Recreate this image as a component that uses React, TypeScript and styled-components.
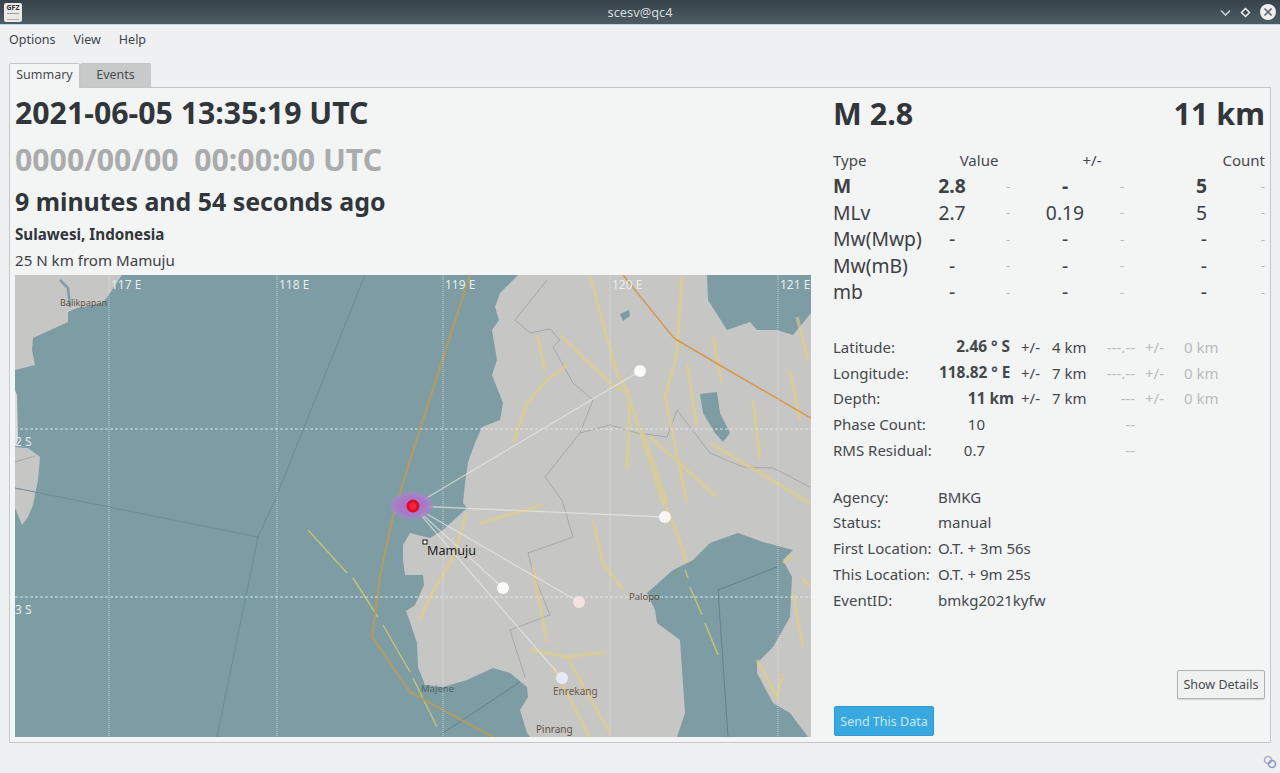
import styled, { createGlobalStyle } from 'styled-components'

const GlobalStyle = createGlobalStyle`
  html, body {
    margin: 0;
    padding: 0;
    height: 100%;
    overflow: hidden;
    background: #eff0f1;
  }
  #root {
    height: 100%;
  }
`

const Window = styled.div`
  display: flex;
  flex-direction: column;
  width: 1280px;
  height: 773px;
  font-family: 'Noto Sans', 'Open Sans', sans-serif;
  color: #31363b;
  background: #eff0f1;
`

const TitleBar = styled.header`
  position: relative;
  display: flex;
  align-items: center;
  justify-content: center;
  height: 25px;
  padding-bottom: 1px;
  box-sizing: border-box;
  flex: none;
  background: linear-gradient(#37424a, #4e5b63);
  border-bottom: 1px solid #b9d6ea;
  color: #d5dade;
  font-size: 12.8px;
  margin-bottom: 1px;
`

const AppIcon = styled.div`
  position: absolute;
  left: 4px;
  top: 3px;
  width: 18px;
  height: 19px;
  border-radius: 2px;
  background: #e9e9e7;
  color: #2f3336;
  font-size: 7px;
  font-weight: 700;
  line-height: 9px;
  text-align: center;
  &::after {
    content: '';
    position: absolute;
    left: 3px;
    right: 3px;
    top: 10px;
    height: 5px;
    border-top: 1px solid #9a9c9d;
    border-bottom: 1px solid #b0b2b3;
  }
`

const WindowButtons = styled.div`
  position: absolute;
  right: 3px;
  top: 3px;
  display: flex;
  align-items: center;
  gap: 7px;
`

const MenuBar = styled.nav`
  display: flex;
  gap: 18px;
  height: 26px;
  flex: none;
  align-items: center;
  padding-left: 9px;
  font-size: 12.5px;
  color: #3f4549;
`

const Tabs = styled.div`
  display: flex;
  height: 24px;
  flex: none;
  margin: 11px 0 0 9px;
`

const Tab = styled.div<{ $active?: boolean }>`
  display: flex;
  align-items: center;
  justify-content: center;
  width: 71px;
  height: ${p => (p.$active ? '25px' : '24px')};
  padding-bottom: ${p => (p.$active ? '3px' : '2px')};
  box-sizing: border-box;
  font-size: 12.5px;
  color: #474c50;
  border: 1px solid #c4c6c7;
  border-bottom: 0;
  border-radius: 2px 2px 0 0;
  background: ${p => (p.$active ? '#f3f4f4' : '#c8caca')};
  position: relative;
  z-index: ${p => (p.$active ? 1 : 0)};
`

const Panel = styled.main`
  display: grid;
  grid-template-columns: 796px 1fr;
  column-gap: 22px;
  width: 1262px;
  height: 656px;
  flex: none;
  box-sizing: border-box;
  margin-left: 9px;
  padding: 5px 6px 5px 5px;
  background: #f3f4f4;
  border: 1px solid #c4c6c7;
`

const LeftColumn = styled.section`
  display: flex;
  flex-direction: column;
  min-height: 0;
`

const DateLine = styled.div<{ $muted?: boolean }>`
  font-size: 30.25px;
  font-weight: 700;
  line-height: 40px;
  height: ${p => (p.$muted ? '43px' : '47px')};
  color: ${p => (p.$muted ? '#a9abac' : '#31363b')};
  white-space: pre;
`

const AgoLine = styled.div`
  font-size: 24.9px;
  font-weight: 700;
  line-height: 36px;
  height: 38px;
`

const RegionLine = styled.div`
  font-size: 15.2px;
  font-weight: 700;
  line-height: 26px;
`

const PlaceLine = styled.div`
  font-size: 15.1px;
  line-height: 26px;
  height: 28px;
  color: #3c4145;
`

const MapFrame = styled.div`
  height: 462px;
  flex: none;
  svg {
    display: block;
  }
`

const RightColumn = styled.section`
  display: flex;
  flex-direction: column;
  min-height: 0;
`

const Headline = styled.div`
  display: flex;
  justify-content: space-between;
  height: 54px;
  font-size: 30.5px;
  font-weight: 700;
  line-height: 40px;
`

const MagGrid = styled.div`
  display: grid;
  grid-template-columns: 90px 58px 54px 60px 54px 58px 58px;
  grid-template-rows: 25.5px;
  grid-auto-rows: 26.5px;
  align-items: center;
  font-size: 19.3px;
  color: #3c4145;
  width: 432px;
`

const MagHead = styled.div<{ $align?: string; $span?: number }>`
  font-size: 15px;
  text-align: ${p => p.$align || 'left'};
  color: #44494d;
  white-space: nowrap;
  grid-column: span ${p => p.$span || 1};
`

const MagCell = styled.div<{ $align?: string; $bold?: boolean; $faint?: boolean }>`
  text-align: ${p => p.$align || 'left'};
  font-weight: ${p => (p.$bold ? 700 : 400)};
  color: ${p => (p.$faint ? '#b5b7b8' : 'inherit')};
  white-space: nowrap;
  ${p => p.$faint && 'font-size: 13px;'}
`

const InfoGrid = styled.div`
  display: grid;
  grid-template-columns: 106px 71px 11px 31px 46px 37px 49px 1fr;
  grid-auto-rows: 25.75px;
  align-items: center;
  margin-top: 29px;
  font-size: 15px;
  color: #44494d;
`

const InfoCell = styled.div<{ $align?: string; $bold?: boolean; $faint?: boolean; $span?: number }>`
  text-align: ${p => p.$align || 'left'};
  font-weight: ${p => (p.$bold ? 700 : 400)};
  font-size: ${p => (p.$bold ? '15.4px' : 'inherit')};
  color: ${p => (p.$faint ? '#b9bbbc' : 'inherit')};
  white-space: nowrap;
  ${p => p.$span && `grid-column: span ${p.$span};`}
`

const InfoValue = styled(InfoCell)<{ $outdent?: boolean }>`
  margin-right: ${p => (p.$outdent ? '-4px' : '0')};
`

const FaintSign = styled(InfoCell)`
  padding-left: 10px;
`

const CountValue = styled(InfoCell)`
  padding-right: 25px;
  text-align: right;
`

const MetaList = styled.dl`
  display: grid;
  grid-template-columns: 105px 1fr;
  grid-auto-rows: 25.75px;
  align-items: center;
  margin: 21px 0 0;
  font-size: 15px;
  color: #44494d;
  dt, dd {
    margin: 0;
  }
`

const Footer = styled.div`
  display: flex;
  flex-direction: column;
  margin-top: auto;
  padding-bottom: 1px;
`

const DetailsButton = styled.button`
  align-self: flex-end;
  width: 88px;
  height: 29px;
  padding: 0;
  font: inherit;
  font-size: 12.5px;
  color: #474c50;
  background: #f0f1f1;
  border: 1px solid #b0b2b3;
  border-radius: 2px;
  box-shadow: 0 1px 1px rgba(0, 0, 0, 0.15);
`

const SendButton = styled.button`
  width: 100px;
  height: 30px;
  margin: 7px 0 0 1px;
  padding: 0;
  font: inherit;
  font-size: 12.5px;
  color: #c8e8f7;
  background: #38a8e0;
  border: 1px solid #3398d0;
  border-radius: 2px;
`

const StatusBar = styled.footer`
  display: flex;
  flex: 1;
  justify-content: flex-end;
  align-items: flex-end;
  padding: 0 3px 4px 0;
`

const mainLand = '518,275 500,293 495,307 499,320 492,330 497,360 492,375 503,403 500,420 482,427 475,443 468,462 465,483 463,503 467,508 443,530 430,538 410,533 403,545 403,560 405,575 423,575 424,585 415,605 406,611 410,622 417,643 418,667 425,685 443,687 467,680 493,668 510,673 527,687 528,697 520,710 527,733 530,737 677,737 685,713 680,640 657,623 655,610 647,593 673,570 693,560 710,543 738,533 763,542 793,550 783,560 792,577 790,617 773,647 757,663 757,673 773,703 790,713 808,737 811,737 811,313 793,335 777,330 757,330 750,322 727,330 708,300 707,275'

const boundaries = [
  '547,280 523,310 515,320 530,333 550,329 560,340 553,347 573,383 593,400 580,433 610,425 637,433 667,437 677,410 690,427 710,453 743,467 773,468 810,487',
  '580,433 545,477 562,500 573,537 528,553 533,573 550,615 510,630 525,677',
  '15,462 35,456',
]

const faults = [
  '590,276 617,373 627,390 663,503',
  '682,276 677,353 665,397 670,420 687,503',
  '687,363 697,427',
  '713,337 722,383',
  '753,400 760,460',
  '790,370 800,420',
  '797,317 808,360',
  '537,335 545,370',
  '567,365 547,380 527,403 513,443',
  '560,335 610,383 627,393',
  '630,403 627,470',
  '643,433 667,503',
  '650,437 717,497',
  '710,443 810,503',
  '467,513 453,557 430,597 420,620',
  '480,523 543,505',
  '593,520 603,563 623,590',
  '533,567 547,643',
  '530,650 567,657 607,652',
  '567,657 610,733',
  '553,667 590,737',
  '663,500 677,533 687,563',
  '793,593 803,647',
  '757,660 777,697 783,673',
  '783,563 793,555',
  '803,578 810,587',
]

const seaFaults = [
  '308,530 347,573',
  '353,578 378,617',
  '383,625 410,672',
  '413,678 437,727',
  '685,570 688,578',
  '690,587 702,615',
  '705,623 718,655',
]

const stations = [
  { x: 640, y: 371, fill: '#fbfbfb' },
  { x: 665, y: 517, fill: '#f6f6f6' },
  { x: 503, y: 588, fill: '#fafafa' },
  { x: 579, y: 602, fill: '#f3e2e2' },
  { x: 562, y: 678, fill: '#e8e8f6' },
]

const gridX = [
  { x: 109, label: '117 E' },
  { x: 277, label: '118 E' },
  { x: 443, label: '119 E' },
  { x: 610, label: '120 E' },
  { x: 778, label: '121 E' },
]

const gridY = [
  { y: 429, label: '2 S' },
  { y: 597, label: '3 S' },
]

const mapLabels = [
  { x: 60, y: 306, text: 'Balikpapan', size: 9, fill: '#5d5348' },
  { x: 629, y: 600, text: 'Palopo', size: 9.5, fill: '#5d5348' },
  { x: 421, y: 692, text: 'Majene', size: 9.5, fill: '#55666a' },
  { x: 553, y: 695, text: 'Enrekang', size: 10, fill: '#6d5a44' },
  { x: 536, y: 733, text: 'Pinrang', size: 10, fill: '#5d5348' },
]

const QuakeMap = () => (
  <svg width={796} height={462} viewBox="15 275 796 462">
    <defs>
      <radialGradient id="uncertainty">
        <stop offset="0" stopColor="#b868c4" />
        <stop offset="0.7" stopColor="#a67cc8" />
        <stop offset="1" stopColor="#a28ac8" stopOpacity="0.7" />
      </radialGradient>
    </defs>
    <rect x={15} y={275} width={796} height={462} fill="#7d9ca3" />
    <polygon points="15,275 122,275 110,293 103,303 77,308 68,312 68,322 33,338 32,350 35,365 15,370" fill="#c6c6c4" />
    <polyline points="60,280 68,288 70,307" fill="none" stroke="#7d9ca3" strokeWidth={2.5} />
    <polygon points="15,390 17,395 18,440 15,447" fill="#d8dcdc" />
    <polygon points="15,447 28,448 40,457 38,480 33,505 28,517 22,525 15,508" fill="#c6c6c4" />
    <polygon points={mainLand} fill="#c6c6c4" />
    <polygon points="620,314 629,310 630,316 623,321" fill="#7d9ca3" />
    <polygon points="700,394 717,392 720,413 730,433 723,442 715,433 703,413" fill="#7d9ca3" />

    {boundaries.map(p => (
      <polyline key={p} points={p} fill="none" stroke="#a8a8a8" strokeWidth={1} />
    ))}
    {faults.map(p => (
      <polyline key={p} points={p} fill="none" stroke="#dfcf84" strokeWidth={3.5} opacity={0.6} />
    ))}
    {seaFaults.map(p => (
      <polyline key={p} points={p} fill="none" stroke="#c2c27a" strokeWidth={1.5} />
    ))}
    <polyline points="365,275 275,500 258,537 217,737" fill="none" stroke="#6b8d95" strokeWidth={1} />
    <polyline points="15,488 258,537" fill="none" stroke="#6b8d95" strokeWidth={1} />
    <polyline points="728,737 718,590 777,567" fill="none" stroke="#5f838b" strokeWidth={1} />
    <polyline points="443,733 520,682" fill="none" stroke="#5f838b" strokeWidth={1} />
    <polyline points="470,275 410,460 392,520 380,577 372,637 410,692 443,710 493,737" fill="none" stroke="#ab9c6c" strokeWidth={2.5} />
    <polyline points="623,275 673,337 677,340 723,367 811,418" fill="none" stroke="#d8984c" strokeWidth={1.5} />

    {gridX.map(g => (
      <line key={g.x} x1={g.x} y1={275} x2={g.x} y2={737} stroke="#e4eded" strokeWidth={1} strokeDasharray="1 1" opacity={0.65} />
    ))}
    {gridY.map(g => (
      <line key={g.y} x1={15} y1={g.y} x2={811} y2={g.y} stroke="#eef2f2" strokeWidth={1} strokeDasharray="3 2" opacity={0.8} />
    ))}
    {gridX.map(g => (
      <text key={g.label} x={g.x + 2} y={289} fontSize={12} fill="#e6eeee">{g.label}</text>
    ))}
    {gridY.map(g => (
      <text key={g.label} x={15} y={g.y + 17} fontSize={12} fill="#e6eeee">{g.label}</text>
    ))}
    {mapLabels.map(l => (
      <text key={l.text} x={l.x} y={l.y} fontSize={l.size} fill={l.fill}>{l.text}</text>
    ))}

    {stations.map(s => (
      <line key={s.x} x1={413} y1={506} x2={s.x} y2={s.y} stroke="#ecebe6" strokeWidth={1.3} opacity={0.65} />
    ))}
    {stations.map(s => (
      <circle key={s.x} cx={s.x} cy={s.y} r={6} fill={s.fill} />
    ))}

    <ellipse cx={411.5} cy={505.5} rx={21.5} ry={13.5} fill="url(#uncertainty)" />
    <circle cx={413} cy={506} r={6.5} fill="#d8102c" />
    <circle cx={413} cy={506} r={3.5} fill="#f8203e" />

    <rect x={423} y={540} width={4} height={4} fill="#fff" stroke="#111" strokeWidth={1} />
    <text x={427} y={554.5} fontSize={12.6} fill="#1d1d1d">Mamuju</text>
  </svg>
)

const magRows = [
  { type: 'M', value: '2.8', err: '-', count: '5', bold: true },
  { type: 'MLv', value: '2.7', err: '0.19', count: '5' },
  { type: 'Mw(Mwp)', value: '-', err: '-', count: '-' },
  { type: 'Mw(mB)', value: '-', err: '-', count: '-' },
  { type: 'mb', value: '-', err: '-', count: '-' },
]

const locationRows = [
  { label: 'Latitude:', value: '2.46 ° S', err: '4 km', alt: '---.--' },
  { label: 'Longitude:', value: '118.82 ° E', err: '7 km', alt: '---.--' },
  { label: 'Depth:', value: '11 km', err: '7 km', alt: '---', outdent: true },
]

const metaRows = [
  ['Agency:', 'BMKG'],
  ['Status:', 'manual'],
  ['First Location:', 'O.T. + 3m 56s'],
  ['This Location:', 'O.T. + 9m 25s'],
  ['EventID:', 'bmkg2021kyfw'],
]

const App = () => (
  <Window>
    <GlobalStyle />
    <TitleBar>
      <AppIcon>GFZ</AppIcon>
      scesv@qc4
      <WindowButtons>
        <svg width={13} height={13} viewBox="0 0 13 13">
          <path d="M2 4.5 L6.5 9 L11 4.5" fill="none" stroke="#c8cdd1" strokeWidth={1.6} />
        </svg>
        <svg width={13} height={13} viewBox="0 0 13 13">
          <path d="M6.5 2.5 L10.5 6.5 L6.5 10.5 L2.5 6.5 Z" fill="none" stroke="#eef0f1" strokeWidth={1.5} />
        </svg>
        <svg width={18} height={18} viewBox="0 0 18 18">
          <circle cx={9} cy={9} r={8} fill="#eeeeee" />
          <path d="M5.5 5.5 L12.5 12.5 M12.5 5.5 L5.5 12.5" stroke="#5b6468" strokeWidth={1.6} />
        </svg>
      </WindowButtons>
    </TitleBar>
    <MenuBar>
      <span>Options</span>
      <span>View</span>
      <span>Help</span>
    </MenuBar>
    <Tabs>
      <Tab $active>Summary</Tab>
      <Tab>Events</Tab>
    </Tabs>
    <Panel>
      <LeftColumn>
        <DateLine>2021-06-05 13:35:19 UTC</DateLine>
        <DateLine $muted>{'0000/00/00  00:00:00 UTC'}</DateLine>
        <AgoLine>9 minutes and 54 seconds ago</AgoLine>
        <RegionLine>Sulawesi, Indonesia</RegionLine>
        <PlaceLine>25 N km from Mamuju</PlaceLine>
        <MapFrame>
          <QuakeMap />
        </MapFrame>
      </LeftColumn>
      <RightColumn>
        <Headline>
          <span>M 2.8</span>
          <span>11 km</span>
        </Headline>
        <MagGrid>
          <MagHead>Type</MagHead>
          <MagHead $align="center" $span={2}>Value</MagHead>
          <MagHead $align="center" $span={2}>+/-</MagHead>
          <MagHead $align="right" $span={2}>Count</MagHead>
          {magRows.map(r => [
            <MagCell key={r.type + 't'} $bold={r.bold}>{r.type}</MagCell>,
            <MagCell key={r.type + 'v'} $bold={r.bold} $align="center">{r.value}</MagCell>,
            <MagCell key={r.type + 'a'} $faint $align="center">-</MagCell>,
            <MagCell key={r.type + 'e'} $bold={r.bold} $align="center">{r.err}</MagCell>,
            <MagCell key={r.type + 'b'} $faint $align="center">-</MagCell>,
            <MagCell key={r.type + 'c'} $bold={r.bold} $align="right">{r.count}</MagCell>,
            <MagCell key={r.type + 'd'} $faint $align="right">-</MagCell>,
          ])}
        </MagGrid>
        <InfoGrid>
          {locationRows.map(r => [
            <InfoCell key={r.label + 'l'}>{r.label}</InfoCell>,
            <InfoValue key={r.label + 'v'} $bold $align="right" $outdent={r.outdent}>{r.value}</InfoValue>,
            <span key={r.label + 's'} />,
            <InfoCell key={r.label + 'p'}>+/-</InfoCell>,
            <InfoCell key={r.label + 'e'}>{r.err}</InfoCell>,
            <InfoCell key={r.label + 'a'} $faint $align="right">{r.alt}</InfoCell>,
            <FaintSign key={r.label + 'q'} $faint>+/-</FaintSign>,
            <InfoCell key={r.label + 'z'} $faint>0 km</InfoCell>,
          ])}
          <InfoCell>Phase Count:</InfoCell>
          <CountValue>10</CountValue>
          <InfoCell $span={3} />
          <InfoCell $faint $align="right">--</InfoCell>
          <InfoCell $span={2} />
          <InfoCell>RMS Residual:</InfoCell>
          <CountValue>0.7</CountValue>
          <InfoCell $span={3} />
          <InfoCell $faint $align="right">--</InfoCell>
          <InfoCell $span={2} />
        </InfoGrid>
        <MetaList>
          {metaRows.map(([k, v]) => [
            <dt key={k}>{k}</dt>,
            <dd key={v}>{v}</dd>,
          ])}
        </MetaList>
        <Footer>
          <DetailsButton>Show Details</DetailsButton>
          <SendButton>Send This Data</SendButton>
        </Footer>
      </RightColumn>
    </Panel>
    <StatusBar>
      <svg width={14} height={14} viewBox="0 0 14 14">
        <circle cx={5} cy={5} r={3.5} fill="none" stroke="#a9aecb" strokeWidth={1.6} />
        <circle cx={9} cy={9} r={3.5} fill="none" stroke="#8f97c4" strokeWidth={1.6} />
      </svg>
    </StatusBar>
  </Window>
)

export default App
